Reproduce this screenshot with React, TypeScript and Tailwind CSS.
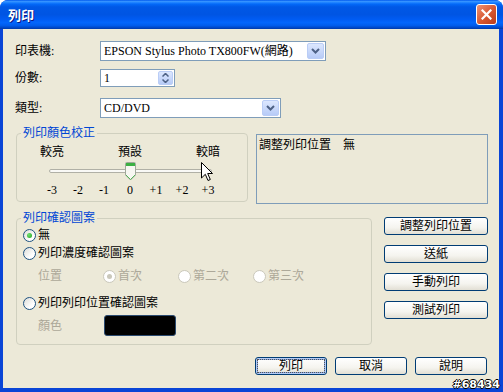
import React from "react";

const DropBtn = () => (
  <div className="flex h-full w-[17px] items-center justify-center rounded-[2px] border border-[#BACDF6] bg-[linear-gradient(to_bottom,#DCE7FE,#B7CBF7)]">
    <svg width="9" height="6" viewBox="0 0 9 6">
      <path d="M1 1 L4.5 4.5 L8 1" fill="none" stroke="#4D6185" strokeWidth="2" />
    </svg>
  </div>
);

const SpinBtn = () => (
  <div className="flex h-full w-[15px] flex-col items-center justify-center gap-[2px] rounded-[2px] border border-[#BACDF6] bg-[linear-gradient(to_bottom,#DCE7FE,#B7CBF7)]">
    <svg width="7" height="4" viewBox="0 0 7 4">
      <path d="M0.5 3.5 L3.5 0.5 L6.5 3.5" fill="none" stroke="#4D6185" strokeWidth="1.5" />
    </svg>
    <svg width="7" height="4" viewBox="0 0 7 4">
      <path d="M0.5 0.5 L3.5 3.5 L6.5 0.5" fill="none" stroke="#4D6185" strokeWidth="1.5" />
    </svg>
  </div>
);

const Radio = ({ checked, disabled }: { checked?: boolean; disabled?: boolean }) => (
  <span
    className={`flex h-[13px] w-[13px] shrink-0 items-center justify-center rounded-full border ${
      disabled
        ? "border-[#CAC8BB] bg-white"
        : "border-[#1C5180] bg-[linear-gradient(135deg,#DCDCD7,#FFFFFF_70%)]"
    }`}
  >
    {checked && (
      <span
        className={`h-[5px] w-[5px] rounded-full ${
          disabled ? "bg-[#CAC8BB]" : "bg-[radial-gradient(circle_at_35%_35%,#6FE06F,#21A121)]"
        }`}
      />
    )}
  </span>
);

const XpButton = ({
  children,
  className = "",
  isDefault,
}: {
  children: React.ReactNode;
  className?: string;
  isDefault?: boolean;
}) => (
  <button
    className={`flex h-[18px] items-center justify-center rounded-[3px] border border-[#003C74] bg-[linear-gradient(to_bottom,#FFFFFF,#F5F4EF_60%,#E2DFD4)] p-[1px] text-[12px] leading-[14px] text-black ${
      isDefault ? "shadow-[inset_0_0_0_1px_#B6CCF5,inset_0_0_0_2px_#85A6E6]" : ""
    } ${className}`}
  >
    {isDefault ? (
      <span className="flex h-full w-full items-center justify-center border border-dotted border-[#555]">
        {children}
      </span>
    ) : (
      children
    )}
  </button>
);

const Thumb = () => (
  <svg width="11" height="19" viewBox="0 0 11 19">
    <path d="M0.5 1.5 Q0.5 0.5 1.5 0.5 H9.5 Q10.5 0.5 10.5 1.5 V13 L5.5 18 L0.5 13 Z" fill="#F7F7F2" stroke="#A0A89A" />
    <path d="M1 1 H10 V4 H1 Z" fill="#3CB043" />
    <path d="M1 13 L5.5 17.5 L10 13" fill="none" stroke="#56B45A" />
  </svg>
);

const App = () => {
  const ticks = ["-3", "-2", "-1", "0", "+1", "+2", "+3"];
  return (
    <div className="relative flex h-[392px] w-[503px] flex-col overflow-hidden rounded-t-[8px] bg-[#0A45D6] font-['Liberation_Serif','Noto_Sans_CJK_TC',serif] text-[12px] leading-[14px] text-black">
      {/* title bar */}
      <div className="flex h-[29px] shrink-0 items-center justify-between bg-[linear-gradient(to_bottom,#0058EE_0%,#3593FF_5%,#1D82FF_9%,#0369F8_14%,#0058E6_24%,#0055E3_50%,#005BF2_66%,#0366FC_78%,#005CEC_88%,#0048C9_95%,#003AA8_100%)] pl-[8px] pr-[6px]">
        <span className="font-['Noto_Sans_CJK_TC',sans-serif] text-[13px] font-bold text-white [text-shadow:1px_1px_0_#0A1883]">
          列印
        </span>
        <div className="flex h-[21px] w-[21px] items-center justify-center rounded-[3px] border border-white bg-[linear-gradient(135deg,#EE9274,#D7562F_55%,#B83C1C)]">
          <svg width="11" height="11" viewBox="0 0 11 11">
            <path d="M1.5 1.5 L9.5 9.5 M9.5 1.5 L1.5 9.5" stroke="white" strokeWidth="2.2" strokeLinecap="square" />
          </svg>
        </div>
      </div>

      {/* body */}
      <div className="ml-[3px] mr-[4px] h-[359px] bg-[#ECE9D8]">
        <div className="pl-[12px]">
          <div className="mt-[12px] flex h-[20px] items-center">
            <span className="w-[85px]">印表機:</span>
            <div className="flex h-[20px] w-[226px] items-center border border-[#7F9DB9] bg-white p-[1px]">
              <span className="flex-1 pl-[2px]">EPSON Stylus Photo TX800FW(網路)</span>
              <DropBtn />
            </div>
          </div>
          <div className="mt-[8px] flex h-[18px] items-center">
            <span className="w-[85px]">份數:</span>
            <div className="flex h-[18px] w-[75px] items-center border border-[#7F9DB9] bg-white p-[1px]">
              <span className="flex-1 pl-[2px]">1</span>
              <SpinBtn />
            </div>
          </div>
          <div className="mt-[11px] flex h-[20px] items-center">
            <span className="w-[85px]">類型:</span>
            <div className="flex h-[20px] w-[181px] items-center border border-[#7F9DB9] bg-white p-[1px]">
              <span className="flex-1 pl-[2px]">CD/DVD</span>
              <DropBtn />
            </div>
          </div>
        </div>

        {/* colour adjust + position info */}
        <div className="mt-[8px] flex items-start pl-[13px]">
          <fieldset className="w-[232px] rounded-[4px] border border-[#D0D0BF] pb-[4px]">
            <legend className="ml-[4px] px-[2px] text-[#0046D5]">列印顏色校正</legend>
            <div className="ml-[22px] mt-[5px] grid w-[182px] grid-cols-7 text-center">
              <span className="col-start-1 -mx-[6px]">較亮</span>
              <span className="col-start-4 -mx-[6px]">預設</span>
              <span className="col-start-7 -mx-[6px]">較暗</span>
            </div>
            <div className="relative ml-[22px] mt-[3px] flex h-[18px] w-[182px] items-center">
              <div className="ml-[10px] h-[4px] w-[163px] rounded-full border border-[#B0B0A6] bg-[#F9F9F6]" />
              <div className="absolute left-[86px] top-0">
                <Thumb />
              </div>
            </div>
            <div className="ml-[22px] mt-[3px] grid w-[182px] grid-cols-7 text-center">
              {ticks.map((t) => (
                <span key={t}>{t}</span>
              ))}
            </div>
          </fieldset>
          <div className="ml-[8px] mt-[8px] h-[70px] w-[232px] border border-[#7F9DB9] pl-[2px] pt-[3px]">
            調整列印位置　無
          </div>
        </div>

        {/* check pattern + side buttons */}
        <div className="mt-[7px] flex items-start justify-between pl-[13px] pr-[11px]">
          <fieldset className="w-[356px] rounded-[4px] border border-[#D0D0BF] pb-[8px]">
            <legend className="ml-[4px] px-[2px] text-[#0046D5]">列印確認圖案</legend>
            <div className="mt-[3px] flex h-[14px] items-center gap-[2px] pl-[6px]">
              <Radio checked />
              <span>無</span>
            </div>
            <div className="mt-[4px] flex h-[14px] items-center gap-[2px] pl-[6px]">
              <Radio />
              <span>列印濃度確認圖案</span>
            </div>
            <div className="mt-[9px] flex h-[14px] items-center pl-[21px] text-[#ACA899]">
              <span className="w-[65px]">位置</span>
              <div className="flex w-[75px] items-center gap-[2px]">
                <Radio checked disabled />
                <span>首次</span>
              </div>
              <div className="flex w-[75px] items-center gap-[2px]">
                <Radio disabled />
                <span>第二次</span>
              </div>
              <div className="flex items-center gap-[2px]">
                <Radio disabled />
                <span>第三次</span>
              </div>
            </div>
            <div className="mt-[13px] flex h-[14px] items-center gap-[2px] pl-[6px]">
              <Radio />
              <span>列印列印位置確認圖案</span>
            </div>
            <div className="mt-[5px] flex h-[21px] items-center pl-[21px]">
              <span className="w-[66px] text-[#ACA899]">顏色</span>
              <div className="h-[21px] w-[72px] rounded-[3px] border border-[#2B4A6F] bg-black" />
            </div>
          </fieldset>
          <div className="mt-[6px] flex w-[104px] flex-col gap-[10px]">
            <XpButton>調整列印位置</XpButton>
            <XpButton>送紙</XpButton>
            <XpButton>手動列印</XpButton>
            <XpButton>測試列印</XpButton>
          </div>
        </div>

        {/* dialog buttons */}
        <div className="mt-[12px] flex justify-end gap-2 pr-[12px]">
          <XpButton isDefault className="w-[72px]">
            列印
          </XpButton>
          <XpButton className="w-[72px]">取消</XpButton>
          <XpButton className="w-[72px]">說明</XpButton>
        </div>
      </div>

      {/* mouse pointer over the slider */}
      <svg className="absolute left-[201px] top-[162px]" width="13" height="20" viewBox="0 0 13 20">
        <path d="M0.5 0.5 V16 L4.3 12.3 L7 18.5 L9.3 17.5 L6.7 11.5 H11.5 Z" fill="white" stroke="black" strokeLinejoin="miter" />
      </svg>

      {/* watermark */}
      <span className="absolute bottom-[1px] right-[3px] font-['DejaVu_Sans',sans-serif] text-[11px] font-bold leading-[13px] text-white [text-shadow:1px_0_0_#000,-1px_0_0_#000,0_1px_0_#000,0_-1px_0_#000]">
        #68434
      </span>
    </div>
  );
};

export default App;
